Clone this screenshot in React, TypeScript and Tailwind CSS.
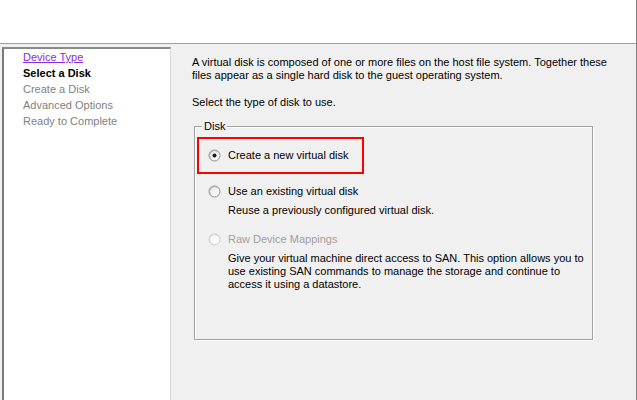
import React from "react";

function Radio({ checked = false, disabled = false }: { checked?: boolean; disabled?: boolean }) {
  return (
    <svg width="13" height="13" viewBox="0 0 13 13" className="shrink-0">
      <defs>
        <linearGradient id={disabled ? "rgd" : "rg"} x1="0" y1="0" x2="1" y2="1">
          <stop offset="0" stopColor={disabled ? "#f4f4f4" : "#e6e6e6"} />
          <stop offset="1" stopColor="#ffffff" />
        </linearGradient>
      </defs>
      <circle cx="6.5" cy="6.5" r="5.5" fill={`url(#${disabled ? "rgd" : "rg"})`} stroke={disabled ? "#c8c8c8" : "#8e8f8f"} strokeWidth="1" />
      <path d="M2.6 9.6 A5 5 0 0 1 9.6 2.6" fill="none" stroke={disabled ? "#d8d8d8" : "#b0b0b0"} strokeWidth="1" />
      {checked && <circle cx="6.5" cy="6.5" r="2" fill="#1a1a1a" />}
    </svg>
  );
}

export default function App() {
  const font = { fontFamily: '"Liberation Sans", Arial, sans-serif' };
  return (
    <div
      className="w-[637px] h-[400px] flex flex-col bg-[#f0f0f0] border-r border-[#808080] text-[11px] text-black overflow-hidden"
      style={font}
    >
      <div className="h-[43px] bg-white shrink-0" />
      <div className="h-px bg-[#a0a0a0] shrink-0" />
      <div className="flex flex-1 pt-[3px] pl-[2px]">
        <div className="w-[169px] bg-white border-l-2 border-t-2 border-l-[#7a7a7a] border-t-[#8a8a8a] border-r border-r-[#d8d8d8] flex flex-col pl-[19px] leading-[16px]">
          <span className="text-[#8a2be2] underline w-fit">Device Type</span>
          <span className="font-bold">Select a Disk</span>
          <span className="text-[#7f7f7f]">Create a Disk</span>
          <span className="text-[#7f7f7f]">Advanced Options</span>
          <span className="text-[#7f7f7f]">Ready to Complete</span>
        </div>
        <div className="flex-1 pl-[21px] pt-[9px] leading-[13px]">
          <p className="w-[420px]">
            A virtual disk is composed of one or more files on the host file system. Together these files appear as a single hard disk to the guest operating system.
          </p>
          <p className="mt-[14px]">Select the type of disk to use.</p>
          <div className="relative mt-[17px] ml-[2px] w-[399px] h-[214px] border border-[#a0a0a0] shadow-[inset_1px_1px_0_#fff,1px_1px_0_#fff]">
            <span className="absolute -top-[7px] left-[7px] px-[2px] bg-[#f0f0f0] leading-[13px]">Disk</span>
            <div className="mt-[10px] ml-[2px] w-[167px] h-[37px] border-2 border-[#ff0000] flex items-center pl-[9px] gap-[7px]">
              <Radio checked />
              <span>Create a new virtual disk</span>
            </div>
            <div className="pl-[13px]">
              <div className="mt-[11px] h-[13px] flex items-center gap-[7px]">
                <Radio />
                <span>Use an existing virtual disk</span>
              </div>
              <p className="mt-[6px] pl-[20px]">Reuse a previously configured virtual disk.</p>
              <div className="mt-[16px] h-[13px] flex items-center gap-[7px]">
                <Radio disabled />
                <span className="text-[#a0a0a0]">Raw Device Mappings</span>
              </div>
              <p className="mt-[6px] pl-[20px] w-[380px]">
                Give your virtual machine direct access to SAN. This option allows you to use existing SAN commands to manage the storage and continue to access it using a datastore.
              </p>
            </div>
          </div>
        </div>
      </div>
    </div>
  );
}
